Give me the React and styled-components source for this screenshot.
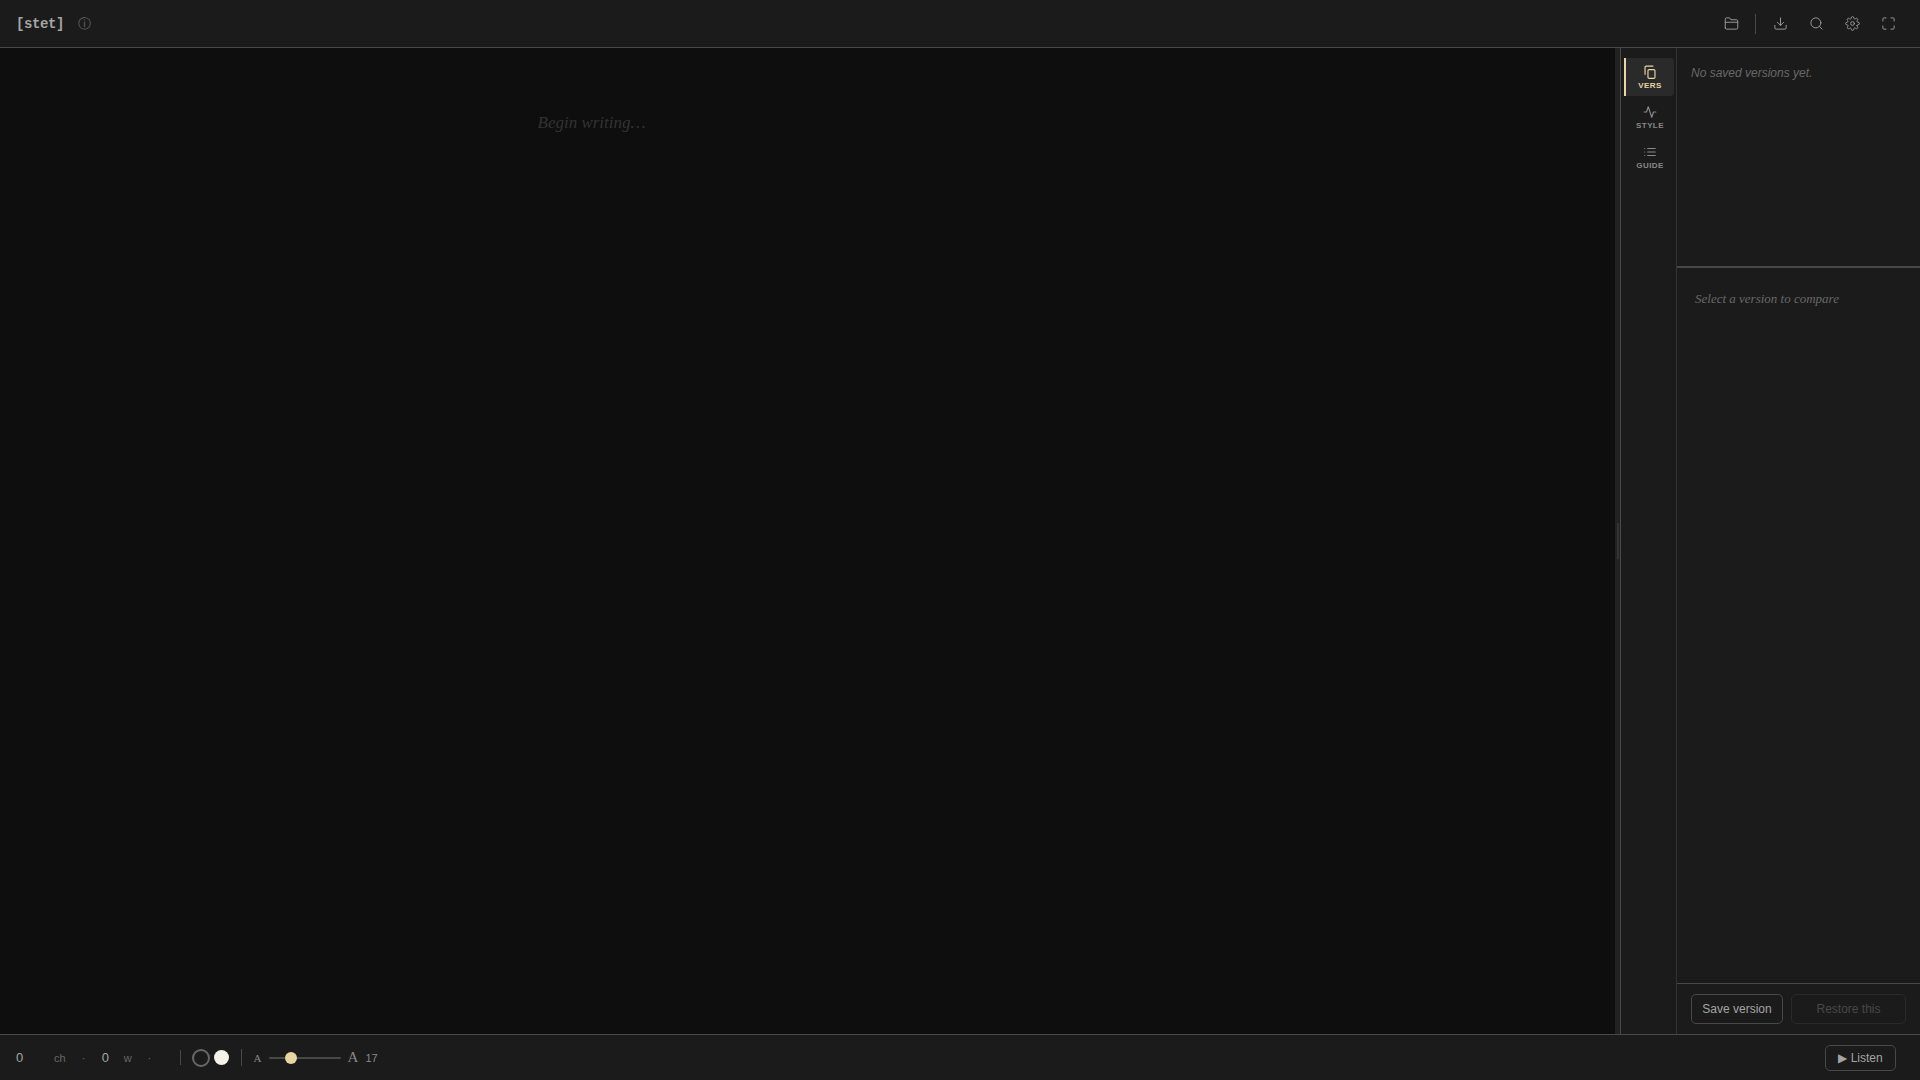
import React, { useState } from "react";
import styled, { createGlobalStyle, ThemeProvider } from "styled-components";

const theme = {
  page: "#0e0e0e",
  bar: "#1b1b1b",
  raised: "#2a2a2a",
  line: "#484848",
  lineSoft: "#333333",
  text: "#a4a4a4",
  icon: "#969696",
  muted: "#888888",
  faint: "#686868",
  accent: "#e8d5a3",
  sans: '"Liberation Sans", Arial, sans-serif',
  serif: '"Liberation Serif", Georgia, serif',
  mono: '"Liberation Mono", "Courier New", monospace',
};

const GlobalStyle = createGlobalStyle`
  *, *::before, *::after { box-sizing: border-box; }
  body { margin: 0; background: ${theme.page}; }
  button, input, textarea { font: inherit; margin: 0; }
`;

const Shell = styled.div`
  display: flex;
  flex-direction: column;
  height: 100vh;
  background: ${(p) => p.theme.page};
  color: ${(p) => p.theme.text};
  font-family: ${(p) => p.theme.sans};
  font-size: 12px;
`;

const TopBar = styled.header`
  display: flex;
  align-items: center;
  justify-content: space-between;
  height: 48px;
  flex: none;
  padding: 0 16px;
  background: ${(p) => p.theme.bar};
  border-bottom: 1px solid ${(p) => p.theme.line};
`;

const Brand = styled.div`
  display: flex;
  align-items: center;
  gap: 14px;
`;

const Logo = styled.h1`
  margin: 0;
  font: bold 14px/16px ${(p) => p.theme.mono};
  letter-spacing: -0.03em;
`;

const InfoButton = styled.button`
  padding: 0;
  border: 0;
  background: none;
  color: ${(p) => p.theme.faint};
  font-size: 13px;
  line-height: 16px;
`;

const Tools = styled.nav`
  display: flex;
  align-items: center;
  gap: 4px;
`;

const IconButton = styled.button`
  display: grid;
  place-items: center;
  width: 32px;
  height: 32px;
  padding: 0;
  border: 0;
  border-radius: 6px;
  background: none;
  color: ${(p) => p.theme.icon};
`;

const Divider = styled.span`
  width: 1px;
  height: ${(p) => p.$height}px;
  margin: ${(p) => p.$margin};
  background: ${(p) => p.theme.line};
`;

const Workspace = styled.div`
  display: flex;
  flex: 1;
  min-height: 0;
`;

const Editor = styled.main`
  display: flex;
  justify-content: center;
  flex: 1;
  min-width: 0;
  padding: 60px 40px;
`;

const Manuscript = styled.textarea`
  width: 100%;
  max-width: 540px;
  padding: 0;
  border: 0;
  outline: 0;
  resize: none;
  background: none;
  color: ${(p) => p.theme.text};
  font-family: ${(p) => p.theme.serif};
  font-size: ${(p) => p.$size}px;
  line-height: 30px;
  &::placeholder {
    color: #333333;
    font-style: italic;
    opacity: 1;
  }
`;

const Resizer = styled.div`
  display: flex;
  align-items: center;
  justify-content: center;
  width: 5px;
  background: #222222;
  cursor: col-resize;
  &::after {
    content: "";
    width: 2px;
    height: 36px;
    margin-left: 1px;
    background: ${(p) => p.theme.lineSoft};
  }
`;

const Sidebar = styled.aside`
  display: flex;
  width: 300px;
  background: ${(p) => p.theme.bar};
  border-left: 1px solid ${(p) => p.theme.line};
`;

const Rail = styled.div`
  display: flex;
  flex-direction: column;
  gap: 2px;
  width: 56px;
  flex: none;
  padding: 10px 2px 10px 3px;
  border-right: 1px solid ${(p) => p.theme.lineSoft};
`;

const RailTab = styled.button`
  display: flex;
  flex-direction: column;
  align-items: center;
  gap: 2px;
  padding: 7px 0 6px;
  border: 0;
  border-left: 2px solid ${(p) => (p.$active ? p.theme.accent : "transparent")};
  border-radius: 0 4px 4px 0;
  background: ${(p) => (p.$active ? p.theme.raised : "none")};
  color: ${(p) => (p.$active ? p.theme.accent : p.theme.muted)};
  font-size: 8px;
  font-weight: bold;
  line-height: 9px;
  letter-spacing: 0.05em;
  text-transform: uppercase;
`;

const Panel = styled.div`
  display: flex;
  flex-direction: column;
  flex: 1;
  min-width: 0;
`;

const VersionList = styled.section`
  height: 220px;
  flex: none;
  padding: 18px 14px;
  border-bottom: 2px solid ${(p) => p.theme.line};
`;

const Compare = styled.section`
  flex: 1;
  padding: 20px 18px;
`;

const Hint = styled.p`
  margin: 0;
  color: ${(p) => p.theme.faint};
  font-family: ${(p) => (p.$serif ? p.theme.serif : p.theme.sans)};
  font-size: ${(p) => (p.$serif ? 13 : 12)}px;
  font-style: italic;
  line-height: ${(p) => (p.$serif ? 22 : 14)}px;
`;

const PanelActions = styled.div`
  display: flex;
  gap: 8px;
  padding: 10px 14px;
  border-top: 1px solid ${(p) => p.theme.line};
`;

const Button = styled.button`
  flex: ${(p) => (p.$grow ? 1 : "none")};
  min-width: ${(p) => (p.$compact ? 71 : 92)}px;
  height: ${(p) => (p.$compact ? 26 : 30)}px;
  padding: 0 10px;
  border: 1px solid ${(p) => p.theme.line};
  border-radius: 5px;
  background: none;
  color: ${(p) => p.theme.text};
  font-size: 12px;
  white-space: nowrap;
  &:disabled {
    border-color: #2a2a2a;
    color: #484848;
  }
`;

const StatusBar = styled.footer`
  display: flex;
  align-items: center;
  justify-content: space-between;
  height: 46px;
  flex: none;
  padding: 0 24px 0 16px;
  background: ${(p) => p.theme.bar};
  border-top: 1px solid ${(p) => p.theme.line};
`;

const Group = styled.div`
  display: flex;
  align-items: center;
`;

const Counts = styled.div`
  display: flex;
  align-items: baseline;
  color: ${(p) => p.theme.faint};
  font-size: 11px;
  line-height: 16px;
`;

const Count = styled.span`
  min-width: ${(p) => p.$width}px;
  color: ${(p) => p.theme.text};
  font-size: 13px;
`;

const Unit = styled.span`
  margin-right: 16px;
`;

const Dot = styled.span`
  width: 20px;
  color: ${(p) => p.theme.faint};
`;

const Swatches = styled.div`
  display: flex;
  align-items: center;
  gap: 4px;
`;

const Swatch = styled.button`
  width: ${(p) => (p.$active ? 18 : 15)}px;
  height: ${(p) => (p.$active ? 18 : 15)}px;
  padding: 0;
  border: ${(p) => (p.$active ? `2px solid ${p.theme.faint}` : "0")};
  border-radius: 50%;
  background: ${(p) => p.$fill};
`;

const SizeControl = styled.label`
  display: flex;
  align-items: center;
  gap: 7px;
  color: ${(p) => p.theme.muted};
  font-size: 11px;
`;

const Letter = styled.span`
  font-family: ${(p) => p.theme.serif};
  font-size: ${(p) => (p.$large ? 15 : 11)}px;
`;

const Slider = styled.input`
  appearance: none;
  width: 72px;
  height: 12px;
  background: none;
  &::-webkit-slider-runnable-track {
    height: 2px;
    border-radius: 1px;
    background: ${(p) => p.theme.line};
  }
  &::-webkit-slider-thumb {
    appearance: none;
    width: 12px;
    height: 12px;
    margin-top: -5px;
    border-radius: 50%;
    background: ${(p) => p.theme.accent};
  }
`;

const drawings = {
  folder: (
    <>
      <path d="M2 19V5a2 2 0 0 1 2-2h5l2 3h9a2 2 0 0 1 2 2v11a2 2 0 0 1-2 2H4a2 2 0 0 1-2-2z" />
      <path d="M2 10h20" />
    </>
  ),
  download: (
    <>
      <path d="M21 15v4a2 2 0 0 1-2 2H5a2 2 0 0 1-2-2v-4" />
      <path d="M7 10l5 5 5-5" />
      <path d="M12 15V3" />
    </>
  ),
  search: (
    <>
      <circle cx="11" cy="11" r="8" />
      <path d="M21 21l-4.350-4.350" />
    </>
  ),
  settings: (
    <>
      <circle cx="12" cy="12" r="3" />
      <path d="M19.400 15a1.650 1.650 0 0 0 .330 1.820l.060.060a2 2 0 0 1-2.830 2.830l-.060-.060a1.650 1.650 0 0 0-1.820-.330 1.650 1.650 0 0 0-1 1.510V21a2 2 0 0 1-4 0v-.090A1.650 1.650 0 0 0 9 19.400a1.650 1.650 0 0 0-1.820.330l-.060.060a2 2 0 0 1-2.830-2.830l.060-.060a1.650 1.650 0 0 0 .330-1.820 1.650 1.650 0 0 0-1.510-1H3a2 2 0 0 1 0-4h.090A1.650 1.650 0 0 0 4.600 9a1.650 1.650 0 0 0-.330-1.820l-.060-.060a2 2 0 0 1 2.830-2.830l.060.060a1.650 1.650 0 0 0 1.820.330H9a1.650 1.650 0 0 0 1-1.510V3a2 2 0 0 1 4 0v.090a1.650 1.650 0 0 0 1 1.510 1.650 1.650 0 0 0 1.820-.330l.060-.060a2 2 0 0 1 2.830 2.830l-.060.060a1.650 1.650 0 0 0-.330 1.820V9a1.650 1.650 0 0 0 1.510 1H21a2 2 0 0 1 0 4h-.090a1.650 1.650 0 0 0-1.510 1z" />
    </>
  ),
  expand: (
    <path d="M8 3H5a2 2 0 0 0-2 2v3m18 0V5a2 2 0 0 0-2-2h-3m0 18h3a2 2 0 0 0 2-2v-3M3 16v3a2 2 0 0 0 2 2h3" />
  ),
  versions: (
    <>
      <rect x="8.500" y="8" width="12" height="15" rx="2" />
      <path d="M3.500 16V4a2 2 0 0 1 2-2H17" />
    </>
  ),
  style: <path d="M22 12h-4l-3 9L9 3l-3 9H2" />,
  guide: <path d="M8 6h13M8 12h13M8 18h13M3 6h.01M3 12h.01M3 18h.01" />,
};

function Icon({ name, size = 15, weight = 1.6 }) {
  return (
    <svg
      width={size}
      height={size}
      viewBox="0 0 24 24"
      fill="none"
      stroke="currentColor"
      strokeWidth={weight}
      strokeLinecap="round"
      strokeLinejoin="round"
      aria-hidden="true"
    >
      {drawings[name]}
    </svg>
  );
}

const tabs = [
  { id: "versions", label: "Vers" },
  { id: "style", label: "Style" },
  { id: "guide", label: "Guide" },
];

const tools = [
  ["download", "Export"],
  ["search", "Find"],
  ["settings", "Settings"],
  ["expand", "Full screen"],
];

export default function App() {
  const [tab, setTab] = useState("versions");
  const [size, setSize] = useState(17);
  const [text, setText] = useState("");
  const words = text.trim() ? text.trim().split(/\s+/).length : 0;

  return (
    <ThemeProvider theme={theme}>
      <GlobalStyle />
      <Shell>
        <TopBar>
          <Brand>
            <Logo>[stet]</Logo>
            <InfoButton aria-label="About">ⓘ</InfoButton>
          </Brand>
          <Tools>
            <IconButton aria-label="Open">
              <Icon name="folder" />
            </IconButton>
            <Divider $height={20} $margin="0 4px" />
            {tools.map(([name, label]) => (
              <IconButton key={name} aria-label={label}>
                <Icon name={name} />
              </IconButton>
            ))}
          </Tools>
        </TopBar>

        <Workspace>
          <Editor>
            <Manuscript
              aria-label="Manuscript"
              placeholder="Begin writing…"
              $size={size}
              value={text}
              onChange={(e) => setText(e.target.value)}
            />
          </Editor>
          <Resizer />
          <Sidebar>
            <Rail>
              {tabs.map(({ id, label }) => (
                <RailTab key={id} $active={tab === id} onClick={() => setTab(id)}>
                  <Icon name={id} size={14} weight={2} />
                  {label}
                </RailTab>
              ))}
            </Rail>
            <Panel>
              <VersionList>
                <Hint>No saved versions yet.</Hint>
              </VersionList>
              <Compare>
                <Hint $serif>Select a version to compare</Hint>
              </Compare>
              <PanelActions>
                <Button>Save version</Button>
                <Button $grow disabled>
                  Restore this
                </Button>
              </PanelActions>
            </Panel>
          </Sidebar>
        </Workspace>

        <StatusBar>
          <Group>
            <Counts>
              <Count $width={38}>{text.length}</Count>
              <Unit>ch</Unit>
              <Dot>·</Dot>
              <Count $width={22}>{words}</Count>
              <Unit>w</Unit>
              <Dot>·</Dot>
            </Counts>
            <Divider $height={15} $margin="0 11px 0 12px" />
            <Swatches>
              <Swatch $active $fill="#1b1b1b" aria-label="Dark page" />
              <Swatch $fill="#f5f2ea" aria-label="Light page" />
            </Swatches>
            <Divider $height={17} $margin="0 12px" />
            <SizeControl>
              <Letter>A</Letter>
              <Slider
                type="range"
                min="13"
                max="28"
                aria-label="Text size"
                value={size}
                onChange={(e) => setSize(Number(e.target.value))}
              />
              <Letter $large>A</Letter>
              <span>{size}</span>
            </SizeControl>
          </Group>
          <Button $compact>▶ Listen</Button>
        </StatusBar>
      </Shell>
    </ThemeProvider>
  );
}
